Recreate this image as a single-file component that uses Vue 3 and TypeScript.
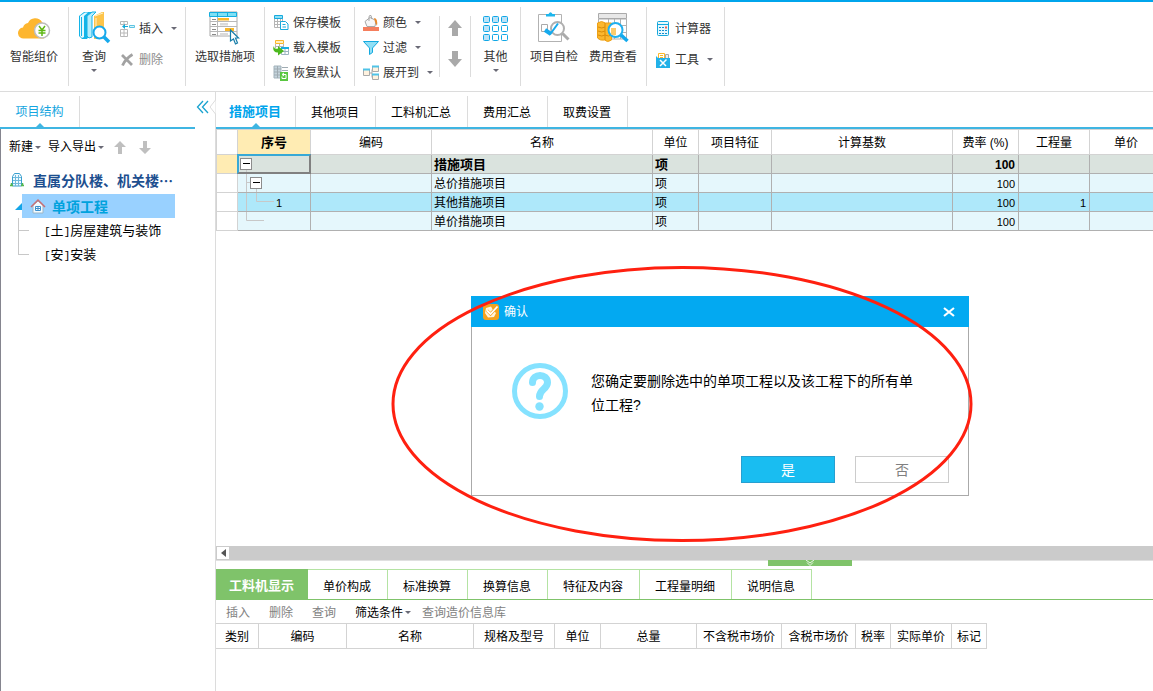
<script setup lang="ts">
interface Column {
  label: string
  width: number
}

interface PriceRow {
  name: string
  unit: string
  rate: string
  quantity: string
  kind: 'root' | 'branch' | 'leaf' | 'last'
  seq: string
}

const mainTabs: string[] = ['措施项目', '其他项目', '工料机汇总', '费用汇总', '取费设置']
const detailTabs: string[] = ['工料机显示', '单价构成', '标准换算', '换算信息', '特征及内容', '工程量明细', '说明信息']

const mainColumns: Column[] = [
  { label: '', width: 22 },
  { label: '序号', width: 73 },
  { label: '编码', width: 121 },
  { label: '名称', width: 221 },
  { label: '单位', width: 46 },
  { label: '项目特征', width: 73 },
  { label: '计算基数', width: 181 },
  { label: '费率 (%)', width: 66 },
  { label: '工程量', width: 71 },
  { label: '单价', width: 73 },
]

const rows: PriceRow[] = [
  { name: '措施项目', unit: '项', rate: '100', quantity: '', kind: 'root', seq: '' },
  { name: '总价措施项目', unit: '项', rate: '100', quantity: '', kind: 'branch', seq: '' },
  { name: '其他措施项目', unit: '项', rate: '100', quantity: '1', kind: 'leaf', seq: '1' },
  { name: '单价措施项目', unit: '项', rate: '100', quantity: '', kind: 'last', seq: '' },
]

const detailColumns: Column[] = [
  { label: '类别', width: 43 },
  { label: '编码', width: 88 },
  { label: '名称', width: 127 },
  { label: '规格及型号', width: 81 },
  { label: '单位', width: 46 },
  { label: '总量', width: 96 },
  { label: '不含税市场价', width: 85 },
  { label: '含税市场价', width: 74 },
  { label: '税率', width: 35 },
  { label: '实际单价', width: 61 },
  { label: '标记', width: 35 },
]
</script>

<template>
  <div class="app">
    <header class="ribbon">
      <div class="group g-smart">
        <button class="big" type="button">
          <svg class="big-icon" width="34" height="34" viewBox="0 0 34 34">
            <path d="M7 27.500a5.500 5.500 0 0 1-1-11a6 6 0 0 1 5-4.500a8 8 0 0 1 14-1a8 8 0 0 1 2 4a8 8 0 0 1 0 12.500z" fill="#fdb62f" />
            <circle cx="25" cy="19.500" r="7.500" fill="#fff" stroke="#bdbdbd" stroke-width="1.500" />
            <path d="M22 15l3 4 3-4M25 19v6M21.500 19.500h7M21.500 22h7" fill="none" stroke="#5fb815" stroke-width="1.500" />
          </svg>
          <span>智能组价</span>
        </button>
      </div>

      <div class="group g-query">
        <button class="big" type="button">
          <svg class="big-icon" width="34" height="34" viewBox="0 0 34 34">
            <path d="M2 5l5-4h8v20l-5 7H5l-3-3z" fill="#14b4e8" />
            <path d="M3 5l5-3.500h3L7 5v21l-2 1-2-2z" fill="#e2f8fe" />
            <path d="M4.500 6v19" stroke="#14b4e8" />
            <path d="M10 5l5-4h4l-4 4v21l-3 1-2-2z" fill="#b5ecfb" stroke="#14b4e8" />
            <path d="M17 5l8-4h2v26l-3 1h-7z" fill="#fdc44a" />
            <path d="M18 5l8-3M19 7v20" stroke="#fff1c8" stroke-width="1" />
            <circle cx="22.500" cy="21.500" r="6" fill="#fff" stroke="#16a9ec" stroke-width="2" />
            <path d="M27 26l5 5" stroke="#16a9ec" stroke-width="3.500" />
          </svg>
          <span>查询</span>
          <i class="caret"></i>
        </button>
        <div class="rows tall">
          <button class="row-btn" type="button">
            <svg width="16" height="16" viewBox="0 0 16 16">
              <path d="M1.500.500h7v3h-7zM5 .500v3M1.500 8.500h7v7h-7zM1.500 12h7M5 8.500v7" fill="none" stroke="#b8b8b8" />
              <path d="M4 5.500h5" stroke="#14a9d8" />
              <path d="M10.500 4.500h5v2h-5z" fill="#d9f4fb" stroke="#5fc4e2" />
              <path d="M6 3L3 5.500 6 8z" fill="#14a9d8" />
            </svg>
            <span>插入</span><i class="caret"></i>
          </button>
          <button class="row-btn dim" type="button">
            <svg width="16" height="16" viewBox="0 0 16 16">
              <path d="M3 3l10 10M13.500 2.500C9 5 6 8 3.500 13.500" fill="none" stroke="#a2a2a2" stroke-width="2.800" />
            </svg>
            <span>删除</span>
          </button>
        </div>
      </div>

      <div class="group g-pick">
        <button class="big" type="button">
          <svg class="big-icon" width="34" height="34" viewBox="0 0 34 34">
            <path d="M2 1h27v24H2z" fill="#fff" stroke="#a9a9a9" />
            <path d="M1.500 1.500h27v4h-27z" fill="#7fe0f5" stroke="#12aee0" />
            <path d="M9.500 1v5M19.500 1v5" stroke="#12aee0" />
            <path d="M9.500 6v19M2 10.500h27M2 15.500h27M2 20.500h27" stroke="#b8b8b8" />
            <path d="M4 8.500h4M4 13.500h4M4 18.500h4M4 23.500h4" stroke="#8a8a8a" />
            <path d="M10 7h11v2.500H10zM17 17h9v3h-9z" fill="#fbb829" />
            <path d="M12 12h8v2.500h-8zM12 22h8v2.500h-8z" fill="#dadada" />
            <path d="M22.500 19v11l3-2 2 5 2-1-2-5h3z" fill="#fff" stroke="#187ea9" stroke-width="1.200" />
          </svg>
          <span>选取措施项</span>
        </button>
      </div>

      <div class="group g-template">
        <div class="rows">
          <button class="row-btn" type="button">
            <svg width="16" height="16" viewBox="0 0 16 16">
              <path d="M1.500 1.500h8v11h-8zM1.500 6.500h8M1.500 9.500h8M4.500 4v8.500M7.500 4v8.500" fill="none" stroke="#b5b5b5" />
              <path d="M1.500.500h8v3h-8z" fill="#8fe0f6" stroke="#16aadd" />
              <path d="M7.500 6.500h5l2.500 2.500v5.500H7.500z" fill="#fff" stroke="#16aadd" />
              <path d="M9.500 9.500h3M9.500 12h3.500" stroke="#16aadd" />
            </svg>
            <span>保存模板</span>
          </button>
          <button class="row-btn" type="button">
            <svg width="16" height="16" viewBox="0 0 16 16">
              <path d="M2.500.500h8v3h-8z" fill="#fff0c4" stroke="#fbb829" />
              <path d="M2.500 4v4M6.500 4v3M10.500 4v3M2 6.500h8" stroke="#b5b5b5" />
              <path d="M8.500 8.500h7v6h-7zM8 11.500h7.500M12 8v7" fill="#fff" stroke="#9bb4c0" />
              <path d="M8 7h8v2H8z" fill="#17ade2" />
              <path d="M1 6c0 3 2 3 4 2.500V6l6 5-6 4.500v-3C1 13-1 9 1 6z" fill="#4cb91e" />
            </svg>
            <span>载入模板</span>
          </button>
          <button class="row-btn" type="button">
            <svg width="16" height="16" viewBox="0 0 16 16">
              <path d="M1 1h7v12H1z" fill="#c5d4dc" stroke="#a2b2bb" />
              <path d="M1 4h7M1 7h7M1 10h7M4.500 1v12M9 2.500h6M9 5.500h6" stroke="#9fabb2" />
              <path d="M7 7h8v9H7z" fill="#59c640" />
              <path d="M9 11.500v2h4v-4H9.500M11 8L9 9.500 11 11" fill="none" stroke="#fff" />
            </svg>
            <span>恢复默认</span>
          </button>
        </div>
      </div>

      <div class="group g-view">
        <div class="rows view-rows">
          <button class="row-btn" type="button">
            <svg width="16" height="16" viewBox="0 0 16 16">
              <path d="M2 6.500l5-4 6 3-1 6H4z" fill="#f6f6f6" stroke="#a7a7a7" />
              <path d="M6 6V2q0-2 2-1.500L9 4" fill="none" stroke="#a7a7a7" />
              <path d="M11 3q4 0 3 8l-2-4z" fill="#e98a2c" />
              <path d="M0 12h16v4H0z" fill="#f57e5d" />
            </svg>
            <span>颜色</span><i class="caret"></i>
          </button>
          <button class="row-btn" type="button">
            <svg width="16" height="16" viewBox="0 0 16 16">
              <path d="M.5 1.500h15L9.500 8v4.500l-3 2V8z" fill="#91dff5" stroke="#13a9df" />
            </svg>
            <span>过滤</span><i class="caret"></i>
          </button>
          <button class="row-btn" type="button">
            <svg width="16" height="16" viewBox="0 0 16 16">
              <path d="M7 8h2M9 4.500v8" fill="none" stroke="#a9a9a9" />
              <path d="M.5 4.500h6v6h-6z" fill="#fff2df" stroke="#aaa" />
              <path d="M9.500 1.500h6v5h-6zM9.500 9.500h6v5h-6z" fill="#fff2df" stroke="#aaa" />
              <path d="M9 1.500h7M0 4.500h7M9 9.500h7" stroke="#4fc3e8" stroke-width="2" />
            </svg>
            <span>展开到</span><i class="caret"></i>
          </button>
        </div>
        <div class="movers">
          <button type="button" aria-label="上移">
            <svg width="14" height="16" viewBox="0 0 14 16"><path d="M7 0l7 8h-4v8H4V8H0z" fill="#a9a9a9" /></svg>
          </button>
          <button type="button" aria-label="下移">
            <svg width="14" height="16" viewBox="0 0 14 16"><path d="M7 16l7-8h-4V0H4v8H0z" fill="#a9a9a9" /></svg>
          </button>
        </div>
        <button class="big other" type="button">
          <svg class="big-icon" width="34" height="34" viewBox="0 0 34 34">
            <g stroke="#10a7e6" fill="#bce3f8">
              <rect x="4.500" y="5.500" width="6" height="6" rx="1" /><rect x="13.500" y="5.500" width="6" height="6" rx="1" /><rect x="22.500" y="5.500" width="6" height="6" rx="1" />
              <rect x="4.500" y="14.500" width="6" height="6" rx="1" /><rect x="13.500" y="14.500" width="6" height="6" rx="1" fill="#fff" /><rect x="22.500" y="14.500" width="6" height="6" rx="1" fill="#fff" />
              <rect x="4.500" y="23.500" width="6" height="6" rx="1" /><rect x="13.500" y="23.500" width="6" height="6" rx="1" fill="#fff" /><rect x="22.500" y="23.500" width="6" height="6" rx="1" fill="#fff" />
            </g>
          </svg>
          <span>其他</span>
          <i class="caret"></i>
        </button>
      </div>

      <div class="group g-check">
        <button class="big" type="button">
          <svg class="big-icon" width="34" height="34" viewBox="0 0 34 34">
            <path d="M1.500 3.500h23v27h-23z" fill="#fff" stroke="#b2b2b2" />
            <path d="M9 5.500V3h2.500q2-3.500 4 0H18v2.500z" fill="#1eb6ec" />
            <path d="M4.500 13.500h6v7h-6z" fill="none" stroke="#aaa" />
            <circle cx="20.500" cy="17.500" r="6.500" fill="#fff" stroke="#b0b0b0" stroke-width="2" />
            <path d="M25.500 22.500l6 6" stroke="#aaa" stroke-width="3" />
            <path d="M8 19l6 4" stroke="#15aaed" stroke-width="4" />
            <path d="M13 23.500l8-11" stroke="#15aaed" stroke-width="2" />
          </svg>
          <span>项目自检</span>
        </button>
        <button class="big" type="button">
          <svg class="big-icon" width="34" height="34" viewBox="0 0 34 34">
            <path d="M2.500 8h28v20h-28zM3 14.500h27M3 21.500h27M12.500 8v20M18.500 8v20M24.500 8v20" fill="#fff" stroke="#b0b0b0" />
            <path d="M2.500 2.500h28v5h-28z" fill="#e8e8e8" stroke="#aaa" />
            <path d="M1.500 12q4-3 8 0l6 0v17q-4 3-7 0-4 1-7-2z" fill="#fcb72d" stroke="#eda017" />
            <path d="M2 16q4 2 7 0M2 20q4 2 7 0M2 24q4 2 7 0M9 12v17M9 24q4 2 6 0" fill="none" stroke="#d98c09" />
            <circle cx="19.500" cy="19" r="7" fill="#fff" stroke="#20b0ee" stroke-width="2" />
            <path d="M15 17h5v7q-3 1-5-1z" fill="#fdcb6a" />
            <path d="M25 24l6.500 6" stroke="#12a9ed" stroke-width="3.500" />
          </svg>
          <span>费用查看</span>
        </button>
      </div>

      <div class="group g-tools">
        <div class="rows tall">
          <button class="row-btn" type="button">
            <svg width="16" height="16" viewBox="0 0 16 16">
              <rect x="2.500" y=".5" width="11" height="14" rx="1" fill="#e7f8fd" stroke="#15a8dd" />
              <path d="M3 3.500h10" stroke="#15a8dd" stroke-width="1" />
              <path d="M4 6.500h2M7 6.500h2M4 9.500h2M7 9.500h2M10 9.500h2M4 12.500h2M7 12.500h2M10 12.500h2" stroke="#158fd0" stroke-width="1" />
              <path d="M10 5.500h2v2h-2z" fill="#f25a4c" />
            </svg>
            <span>计算器</span>
          </button>
          <button class="row-btn" type="button">
            <svg width="16" height="16" viewBox="0 0 16 16">
              <path d="M3.500 1.500h6v6h-6z" fill="#fff" stroke="#fbb829" /><path d="M5 3.500h3M5 5.500h3" stroke="#fbb829" />
              <path d="M10.500 2.500h3v5h-3z" fill="#eee" stroke="#aaa" />
              <path d="M1 4l2 2h12v10H1z" fill="#22b1e8" />
              <path d="M5 8l6 6M11.500 7.500L5 14" stroke="#fff" stroke-width="1.500" />
            </svg>
            <span>工具</span><i class="caret"></i>
          </button>
        </div>
      </div>
    </header>

    <main class="workspace">
      <aside class="side">
        <div class="side-tabs">
          <button class="side-tab" type="button">项目结构</button>
          <button class="collapse" type="button" aria-label="收起">
            <svg width="20" height="18" viewBox="0 0 20 18">
              <path d="M7 3L1.500 9 7 15M12 3L6.500 9 12 15" fill="none" stroke="#1aa3cf" stroke-width="1.300" />
              <path d="M19.500 2L14 9l5.500 7" fill="#fff" stroke="#dcdcdc" />
            </svg>
          </button>
        </div>
        <div class="side-body">
          <div class="side-tools">
            <button type="button">新建<i class="caret"></i></button>
            <button type="button">导入导出<i class="caret"></i></button>
            <button class="mover" type="button" aria-label="上移">
              <svg width="12" height="13" viewBox="0 0 12 13"><path d="M6 0l6 6H8v7H4V6H0z" fill="#bfbfbf" /></svg>
            </button>
            <button class="mover" type="button" aria-label="下移">
              <svg width="12" height="13" viewBox="0 0 12 13"><path d="M6 13l6-6H8V0H4v7H0z" fill="#bfbfbf" /></svg>
            </button>
          </div>
          <div class="tree">
            <div class="node project">
              <svg width="16" height="16" viewBox="0 0 16 16">
                <path d="M3.500 14V4.500L5.500 1.500h5l2 3V14z" fill="#eefaff" stroke="#3a9fce" />
                <path d="M6.500 3v11M9.500 3v11M4 5.500h8M4 8.500h8M4 11.500h8" stroke="#6fb9dc" />
                <path d="M1 13.500h3M12 13.500h3M2.500 11v3M13.500 11v3" stroke="#54b84e" stroke-width="1.500" />
              </svg>
              <span>直属分队楼、机关楼…</span>
            </div>
            <div class="node single">
              <svg width="7" height="7" viewBox="0 0 7 7"><path d="M7 0v7H0z" fill="#14a5e8" /></svg>
              <div class="picked">
                <svg width="16" height="16" viewBox="0 0 16 16">
                  <path d="M3 7v8h10V7L8 3z" fill="#f2fbff" stroke="#9db6c6" />
                  <path d="M1 9l7-7 7 7" fill="none" stroke="#c76f75" stroke-width="1.500" />
                  <path d="M5.500 8.500h5v4h-5zM8 8v5M5 10.500h6" fill="#fff" stroke="#3c8fcc" />
                </svg>
                <span>单项工程</span>
              </div>
            </div>
            <ul class="units">
              <li><span class="mark">[</span>土<span class="mark">]</span>房屋建筑与装饰</li>
              <li><span class="mark">[</span>安<span class="mark">]</span>安装</li>
            </ul>
          </div>
        </div>
      </aside>

      <section class="content">
        <nav class="tabs main-tabs">
          <button v-for="(tab, i) in mainTabs" :key="tab" type="button" :class="{ active: i === 0 }">{{ tab }}</button>
        </nav>

        <div class="sheet">
          <table class="grid main-grid">
            <colgroup>
              <col v-for="(c, i) in mainColumns" :key="i" :style="{ width: c.width + 'px' }" />
            </colgroup>
            <thead>
              <tr>
                <th v-for="(c, i) in mainColumns" :key="i" :class="{ current: i === 1 }">{{ c.label }}</th>
              </tr>
            </thead>
            <tbody>
              <tr v-for="row in rows" :key="row.name" :class="row.kind">
                <td class="marker"></td>
                <td class="seq">
                  <div class="seq-inner">
                    <svg width="38" height="18" viewBox="0 0 38 18">
                      <g v-if="row.kind === 'root'">
                        <path d="M8.500 15v3" stroke="#c8c8c8" />
                        <rect x="2.500" y="3.500" width="11" height="11" fill="#fff" stroke="#8c8c8c" />
                        <path d="M5 8.500h7" stroke="#000" />
                      </g>
                      <g v-else-if="row.kind === 'branch'">
                        <path d="M8.500 0v18M8 8.500h4M18.500 15v3" stroke="#c8c8c8" />
                        <rect x="12.500" y="3.500" width="11" height="11" fill="#fff" stroke="#8c8c8c" />
                        <path d="M15 8.500h7" stroke="#000" />
                      </g>
                      <path v-else-if="row.kind === 'leaf'" d="M8.500 0v18M18.500 0v8.500H36" fill="none" stroke="#c8c8c8" />
                      <path v-else d="M8.500 0v8.500H26" fill="none" stroke="#c8c8c8" />
                    </svg>
                    <span>{{ row.seq }}</span>
                  </div>
                </td>
                <td></td>
                <td>{{ row.name }}</td>
                <td>{{ row.unit }}</td>
                <td></td>
                <td></td>
                <td class="num">{{ row.rate }}</td>
                <td class="num">{{ row.quantity }}</td>
                <td></td>
              </tr>
            </tbody>
          </table>
        </div>

        <div class="scroller">
          <button type="button" aria-label="向左滚动">
            <svg width="5" height="8" viewBox="0 0 5 8"><path d="M5 0v8L0 4z" fill="#555" /></svg>
          </button>
        </div>

        <div class="detail">
          <div class="splitter">
            <button type="button" aria-label="收起明细">
              <svg width="10" height="6" viewBox="0 0 10 6"><path d="M1 0l4 3 4-3M2 2.500L5 5.500l3-3" fill="none" stroke="#e9f7e4" /></svg>
            </button>
          </div>
          <nav class="tabs detail-tabs">
            <button v-for="(tab, i) in detailTabs" :key="tab" type="button" :class="{ active: i === 0 }">{{ tab }}</button>
          </nav>
          <div class="detail-tools">
            <button type="button">插入</button>
            <button type="button">删除</button>
            <button type="button">查询</button>
            <button class="enabled" type="button">筛选条件<i class="caret"></i></button>
            <button class="lookup" type="button">查询造价信息库</button>
          </div>
          <table class="grid detail-grid">
            <colgroup>
              <col v-for="c in detailColumns" :key="c.label" :style="{ width: c.width + 'px' }" />
            </colgroup>
            <thead>
              <tr>
                <th v-for="c in detailColumns" :key="c.label">{{ c.label }}</th>
              </tr>
            </thead>
          </table>
        </div>
      </section>
    </main>

    <div class="confirm" role="dialog" aria-labelledby="confirm-title">
      <div class="confirm-head">
        <svg width="16" height="16" viewBox="0 0 16 16">
          <rect width="16" height="16" rx="3" fill="#f5a21e" />
          <path d="M8 2.500L3 4l-1 5 3 4.500 6-.5 2-4-3-3z" fill="#fff3dc" />
          <path d="M4 6.500l3.500 3.500L14 3" fill="none" stroke="#f5a21e" stroke-width="3" />
          <path d="M4 6.500l3.500 3.500L14.500 2.500" fill="none" stroke="#fff" stroke-width="1.800" />
        </svg>
        <span id="confirm-title">确认</span>
        <button type="button" aria-label="关闭">
          <svg width="12" height="10" viewBox="0 0 12 10"><path d="M1 1l10 8M11 1L1 9" stroke="#fff" stroke-width="2.200" /></svg>
        </button>
      </div>
      <div class="confirm-body">
        <div class="confirm-message">
          <svg width="56" height="56" viewBox="0 0 56 56">
            <circle cx="28" cy="28" r="25.500" fill="none" stroke="#85e2ff" stroke-width="5" />
            <path d="M20.500 19.500c0-9.500 15-9.500 15 0 0 6.500-8 7-8 14" fill="none" stroke="#85e2ff" stroke-width="7" stroke-linecap="round" />
            <circle cx="27.500" cy="43.500" r="4.200" fill="#85e2ff" />
          </svg>
          <p>您确定要删除选中的单项工程以及该工程下的所有单位工程?</p>
        </div>
        <div class="confirm-actions">
          <button class="yes" type="button">是</button>
          <button type="button">否</button>
        </div>
      </div>
      <svg class="ring" width="584" height="280" viewBox="0 0 584 280">
        <ellipse cx="292" cy="140" rx="289" ry="136.500" fill="none" stroke="#ff2010" stroke-width="3" />
      </svg>
    </div>
  </div>
</template>

<style>
html,
body {
  margin: 0;
  background: #fff;
}
</style>

<style scoped>
.app {
  position: relative;
  display: flex;
  flex-direction: column;
  height: 100vh;
  overflow: hidden;
  box-sizing: border-box;
  background: #fff;
  color: #000;
  font-family: "Liberation Sans", "Noto Sans CJK SC", sans-serif;
  font-size: 12px;
  line-height: 16px;
}

.app *,
.app *::before,
.app *::after {
  box-sizing: border-box;
}

button {
  margin: 0;
  padding: 0;
  border: 0;
  background: none;
  color: inherit;
  font: inherit;
  white-space: nowrap;
}

svg {
  display: block;
  flex: none;
}

.caret {
  flex: none;
  width: 0;
  height: 0;
  border: 3px solid transparent;
  border-top-color: #6a6a76;
  border-bottom: 0;
}

/* Ribbon */
.ribbon {
  display: flex;
  flex: none;
  padding: 5px 0;
  border-top: 2px solid #00a5ec;
  border-bottom: 1px solid #dcdcdc;
  color: #333;
}

.group {
  display: flex;
  flex: none;
  height: 79px;
  border-right: 1px solid #dcdcdc;
}

.big {
  display: flex;
  flex-direction: column;
  align-items: center;
  gap: 4px;
  padding-top: 4px;
}

.rows {
  display: flex;
  flex-direction: column;
  padding-top: 3px;
}

.row-btn {
  display: flex;
  align-items: center;
  gap: 4px;
  height: 25px;
}

.row-btn .caret {
  margin-left: 4px;
}

.rows.tall {
  padding-top: 6px;
}

.tall .row-btn {
  height: 31px;
}

.dim {
  color: #8c8c8c;
}

.g-smart {
  padding: 0 10px;
}

.g-query {
  gap: 8px;
  padding: 0 8px;
}

.g-pick {
  padding: 0 9px;
}

.g-template {
  padding: 0 13px 0 8px;
}

.g-view {
  padding-left: 8px;
}

.view-rows {
  width: 76px;
}

.movers {
  display: flex;
  flex-direction: column;
  width: 32px;
  height: 61px;
  margin-top: 9px;
  border: solid #dcdcdc;
  border-width: 0 1px;
}

.movers button {
  display: flex;
  justify-content: center;
  height: 32px;
  padding-top: 4px;
}

.other {
  width: 49px;
}

.g-check {
  gap: 11px;
  padding: 0 9px;
}

.g-tools {
  padding: 0 11px 0 8px;
}

/* Workspace */
.workspace {
  display: flex;
  flex: 1;
  min-height: 0;
}

.side {
  display: flex;
  flex: none;
  flex-direction: column;
  width: 216px;
  border-right: 1px solid #dcdcdc;
}

.side-tabs {
  display: flex;
  flex: none;
  justify-content: space-between;
  height: 37px;
  padding-top: 4px;
  background: linear-gradient(#3fb5e2, #3fb5e2) 0 100% / 195px 2px no-repeat;
}

.side-tab {
  position: relative;
  width: 80px;
  height: 31px;
  border-right: 1px solid #dcdcdc;
  color: #14a5e0;
}

.side-tab::after,
.main-tabs .active::after {
  content: "";
  position: absolute;
  bottom: 0;
  left: 50%;
  margin-left: -4px;
  border: 4px solid transparent;
  border-top: 0;
  border-bottom-color: #3fb5e2;
}

.collapse {
  align-self: flex-start;
  margin: 2px -1px 0 0;
}

.side-body {
  flex: 1;
  border-left: 1px solid #85858f;
}

.side-tools {
  display: flex;
  align-items: center;
  gap: 7px;
  height: 36px;
  padding-left: 8px;
}

.side-tools button {
  display: flex;
  align-items: center;
  gap: 2px;
}

.side-tools .mover {
  margin: 0 3px;
}

.tree {
  font-family: "Noto Sans CJK SC", sans-serif;
  font-size: 13px;
}

.node {
  display: flex;
  align-items: center;
  font-size: 14px;
  font-weight: bold;
}

.project {
  gap: 8px;
  height: 29px;
  padding-left: 8px;
  color: #1d4f8f;
}

.single {
  padding-left: 14px;
}

.picked {
  display: flex;
  align-items: center;
  gap: 6px;
  width: 153px;
  height: 24px;
  padding-left: 8px;
  background: #99d1ff;
  color: #00a2dd;
}

.units {
  margin: 0;
  padding: 0 0 0 17px;
  list-style: none;
}

.units li {
  position: relative;
  height: 24px;
  padding-left: 26px;
  line-height: 24px;
}

.units li::before {
  content: "";
  position: absolute;
  top: 0;
  left: 0;
  width: 11px;
  height: 13px;
  border: solid #c8c8c8;
  border-width: 0 0 1px 1px;
}

.units li:first-child::after {
  content: "";
  position: absolute;
  top: 0;
  left: 0;
  height: 24px;
  border-left: 1px solid #c8c8c8;
}

.mark {
  font-family: "Liberation Mono", monospace;
  font-size: 11px;
}

/* Content */
.content {
  display: flex;
  flex: 1;
  flex-direction: column;
  min-width: 0;
}

.tabs {
  display: flex;
  flex: none;
}

.tabs button {
  position: relative;
  padding: 2px 16px 0 15px;
  border-right: 1px solid #dcdcdc;
}

.main-tabs {
  height: 37px;
  padding-top: 4px;
  border-bottom: 2px solid #3fb5e2;
}

.main-tabs .active {
  padding: 0 14px 0 13px;
  color: #00a5ec;
  font-size: 13px;
  font-weight: bold;
}

.sheet {
  flex: 1;
  min-height: 0;
  overflow: hidden;
}

.grid {
  width: 0;
  table-layout: fixed;
  border-collapse: separate;
  border-spacing: 0;
}

.grid th {
  height: 26px;
  padding: 1px 0 0;
  border: solid #d3d3d3;
  border-width: 1px 1px 1px 0;
  font-weight: normal;
  white-space: nowrap;
}

.grid th:first-child {
  border-left-width: 1px;
}

.grid .current {
  border-bottom-color: #38a9d6;
  background: #ffecb3;
  font-size: 13px;
  font-weight: bold;
}

.main-grid td {
  height: 19px;
  padding: 2px 3px 0 2px;
  border: solid #b0b0b0;
  border-width: 0 1px 1px 0;
  background: #e5f7fc;
  line-height: 16px;
  white-space: nowrap;
}

.main-grid .leaf td {
  background: #aee8fa;
}

.main-grid .root td {
  background: #dae3de;
  font-size: 13px;
  font-weight: bold;
}

.main-grid .marker {
  border-color: #d3d3d3;
  border-left-width: 1px;
}

.main-grid tr .marker {
  background: #fff;
}

.main-grid .root .marker {
  background: #ffecb3;
}

.main-grid .seq {
  position: relative;
  padding: 0;
}

.root .seq::after {
  content: "";
  position: absolute;
  inset: -1px;
  border: 2px solid #808080;
  border-top-color: #38a9d6;
  border-left-color: #38a9d6;
}

.seq-inner {
  display: flex;
  height: 18px;
}

.seq-inner span {
  padding-top: 2px;
  font-size: 11px;
}

.main-grid .num {
  font-size: 11px;
  text-align: right;
}

.main-grid .root .num {
  font-size: 12px;
}

.scroller {
  display: flex;
  flex: none;
  height: 14px;
  background: #cbcbcb;
}

.scroller button {
  display: flex;
  align-items: center;
  justify-content: center;
  width: 14px;
  border: 1px solid #cbcbcb;
  background: #fff;
}

.detail {
  flex: none;
  height: 131px;
}

.splitter {
  display: flex;
  justify-content: center;
  height: 9px;
  padding-left: 251px;
  border-top: 1px solid #e0e0e0;
}

.splitter button {
  display: flex;
  justify-content: center;
  width: 84px;
  height: 6px;
  margin-top: -1px;
  background: #7fc36a;
}

.detail-tabs {
  height: 31px;
  border-bottom: 1px solid #7fc36a;
}

.detail-tabs button {
  padding-top: 4px;
  border-top: 1px solid #b4e3a3;
  border-right-color: #b4e3a3;
}

.detail-tabs .active {
  padding: 2px 13px 0;
  border-color: #7fc36a;
  background: #7fc36a;
  color: #fff;
  font-size: 13px;
  font-weight: bold;
}

.detail-tools {
  display: flex;
  align-items: center;
  gap: 19px;
  height: 23px;
  padding: 2px 0 0 10px;
  color: #828282;
}

.detail-tools button {
  display: flex;
  align-items: center;
  gap: 2px;
}

.detail-tools .enabled {
  color: #000;
}

.detail-tools .lookup {
  margin-left: -8px;
}

.detail-grid th:first-child {
  border-left: 0;
}

/* Confirmation box */
.confirm {
  position: absolute;
  top: 296px;
  left: 471px;
  width: 498px;
}

.confirm-head {
  display: flex;
  align-items: center;
  gap: 5px;
  height: 31px;
  padding: 0 14px 0 12px;
  background: #03a9f1;
  color: #fff;
}

.confirm-head button {
  margin-left: auto;
}

.confirm-body {
  padding: 36px 19px 12px 40px;
  border: 1px solid #aaa;
  border-top: 0;
  background: #fff;
}

.confirm-message {
  display: flex;
  gap: 23px;
}

.confirm-message p {
  width: 328px;
  margin: 0;
  padding-top: 6px;
  font-size: 14px;
  line-height: 24px;
}

.confirm-actions {
  display: flex;
  justify-content: flex-end;
  gap: 20px;
  margin-top: 37px;
}

.confirm-actions button {
  width: 94px;
  height: 27px;
  border: 1px solid #ccc;
  color: #808080;
  font-size: 14px;
}

.confirm-actions .yes {
  border-color: #279fd0;
  background: #19bdf1;
  color: #fff;
}

.ring {
  position: absolute;
  top: -32px;
  left: -81px;
  pointer-events: none;
}
</style>
